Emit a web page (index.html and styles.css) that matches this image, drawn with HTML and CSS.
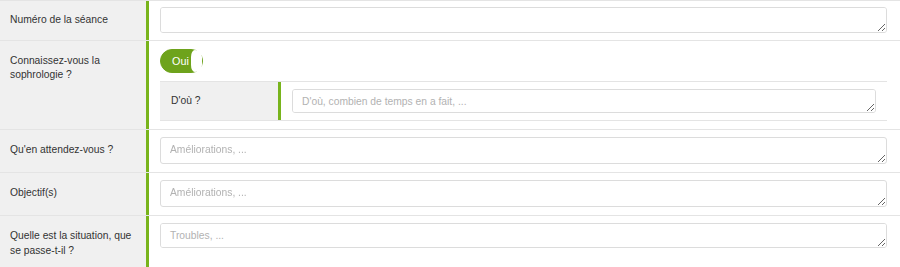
FILE: index.html
```html
<!DOCTYPE html>
<html lang="fr">
<head>
<meta charset="utf-8">
<title>Séance</title>
<link rel="stylesheet" href="styles.css">
</head>
<body>
<div class="form">
  <div class="row row-first">
    <div class="label">Numéro de la séance</div>
    <div class="field"><textarea class="input input-first"></textarea></div>
  </div>
  <div class="row">
    <div class="label">Connaissez-vous la sophrologie ?</div>
    <div class="field field-stack">
      <div class="toggle"><span class="toggle-text">Oui</span><span class="knob"></span></div>
      <div class="sub">
        <div class="sub-label">D'où ?</div>
        <div class="sub-field"><textarea class="input input-sub" placeholder="D'où, combien de temps en a fait, ..."></textarea></div>
      </div>
    </div>
  </div>
  <div class="row">
    <div class="label">Qu'en attendez-vous ?</div>
    <div class="field"><textarea class="input" placeholder="Améliorations, ..."></textarea></div>
  </div>
  <div class="row">
    <div class="label">Objectif(s)</div>
    <div class="field"><textarea class="input" placeholder="Améliorations, ..."></textarea></div>
  </div>
  <div class="row">
    <div class="label">Quelle est la situation, que se passe-t-il ?</div>
    <div class="field"><textarea class="input input-last" placeholder="Troubles, ..."></textarea></div>
  </div>
</div>
</body>
</html>
```
FILE: styles.css
```css
html, body {
  margin: 0;
  padding: 0;
  background: #ffffff;
}

body {
  font-family: "Liberation Sans", Arial, sans-serif;
  font-size: 10.3px;
  line-height: 14.6px;
  color: #333333;
}

.form {
  width: 900px;
}

.row {
  display: flex;
  border-top: 1px solid #e4e4e4;
}

.label {
  box-sizing: border-box;
  width: 149px;
  flex: none;
  padding: 13px 8px 12px 10px;
  background: #f0f0f0;
  border-right: 3px solid #78b41c;
}

.row-first .label {
  padding-top: 12px;
}

.field {
  flex: 1;
  padding: 7px 13px 8px 11px;
}

.row-first .field {
  padding-top: 6px;
  padding-bottom: 6px;
}

.field-stack {
  padding-top: 8px;
  padding-bottom: 8px;
}

.input {
  display: block;
  box-sizing: border-box;
  width: 100%;
  height: 27px;
  margin: 0;
  padding: 5px 9px;
  border: 1px solid #dcdcdc;
  border-radius: 3px;
  background: #ffffff;
  font-family: "Liberation Sans", Arial, sans-serif;
  font-size: 10.3px;
  line-height: 14.6px;
  color: #333333;
  resize: vertical;
  outline: none;
}

.input::placeholder {
  color: #b2b2b2;
}

.input-first {
  height: 26px;
}

.input-last {
  height: 25px;
}

.input-sub {
  height: 24px;
}

.toggle {
  box-sizing: border-box;
  display: flex;
  align-items: center;
  justify-content: space-between;
  width: 43px;
  height: 24px;
  padding-left: 11px;
  border: 1px solid #6ea31c;
  border-radius: 12px;
  background: #6ea31c;
  color: #ffffff;
}

.toggle-text {
  font-size: 10.8px;
  line-height: 14px;
}

.knob {
  width: 11px;
  height: 22px;
  background: #ffffff;
  border-radius: 6px 11px 11px 6px / 11px 11px 11px 11px;
}

.sub {
  display: flex;
  margin-top: 8px;
  border-top: 1px solid #e4e4e4;
  border-bottom: 1px solid #e4e4e4;
}

.sub-label {
  box-sizing: border-box;
  width: 121px;
  flex: none;
  padding: 12px 11px;
  background: #f0f0f0;
  border-right: 3px solid #78b41c;
}

.sub-field {
  flex: 1;
  padding: 7px 11px;
}
```
